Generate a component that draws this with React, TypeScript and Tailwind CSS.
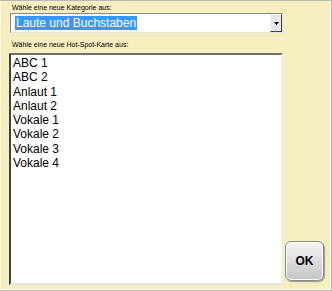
const items = ["ABC 1", "ABC 2", "Anlaut 1", "Anlaut 2", "Vokale 1", "Vokale 2", "Vokale 3", "Vokale 4"];

const App = () => {
   return (
      <div className="w-[332px] h-[291px] bg-[#f6eebf] border-t border-r border-b border-[#b8b8b8] font-['Liberation_Sans',Arial,sans-serif]">
         <div className="h-full border-l border-r border-b border-[#fcf8e2] pl-[8px] pt-[3px]">
            <div className="text-[7px] leading-[8px] text-black ml-[3px]">Wähle eine neue Kategorie aus:</div>

            {/* kategorie dropdown */}
            <div className="mt-[1px] ml-[1px] w-[273px] h-[20px] bg-white border border-t-[#8a8a8a] border-l-[#8a8a8a] border-r-[#e4e4e4] border-b-[#e4e4e4] flex items-center">
               <div className="flex-1 pl-[4px] flex items-center">
                  <span className="bg-[#3399ff] text-white text-[12px] leading-[14px] px-[1px]">Laute und Buchstaben</span>
               </div>
               <div className="w-[12px] h-[18px] bg-[#e6e6e6] border border-t-[#f4f4f4] border-l-[#f4f4f4] border-r-[#404040] border-b-[#404040] flex items-center justify-center">
                  <svg width="5" height="3" viewBox="0 0 5 3"><path d="M0 0h5L2.5 3z" fill="#000" /></svg>
               </div>
            </div>

            <div className="text-[7px] leading-[8px] text-black ml-[3px] mt-[8px]">Wähle eine neue Hot-Spot-Karte aus:</div>

            <div className="flex items-end mt-[4px]">
               {/* karten liste */}
               <div className="w-[274px] h-[232px] bg-white border-2 border-t-[#6e6e6e] border-l-[#404040] border-r-[#f0f0f0] border-b-[#e4e4e4] pl-[2px] pt-[1px]">
                  {items.map((item) => (
                     <div key={item} className="text-[12px] leading-[14.3px] text-black">{item}</div>
                  ))}
               </div>
               <button className="ml-[2px] mb-[4px] w-[39px] h-[40px] rounded-[6px] border border-[#8c8c8c] bg-gradient-to-b from-[#f6f6f6] to-[#c4c4c4] shadow-[inset_0_0_0_1px_#ffffff,1px_1px_1px_#9a9a9a] text-[12px] font-bold text-black flex items-center justify-center">
                  OK
               </button>
            </div>
         </div>
      </div>
   );
};

export default App;
